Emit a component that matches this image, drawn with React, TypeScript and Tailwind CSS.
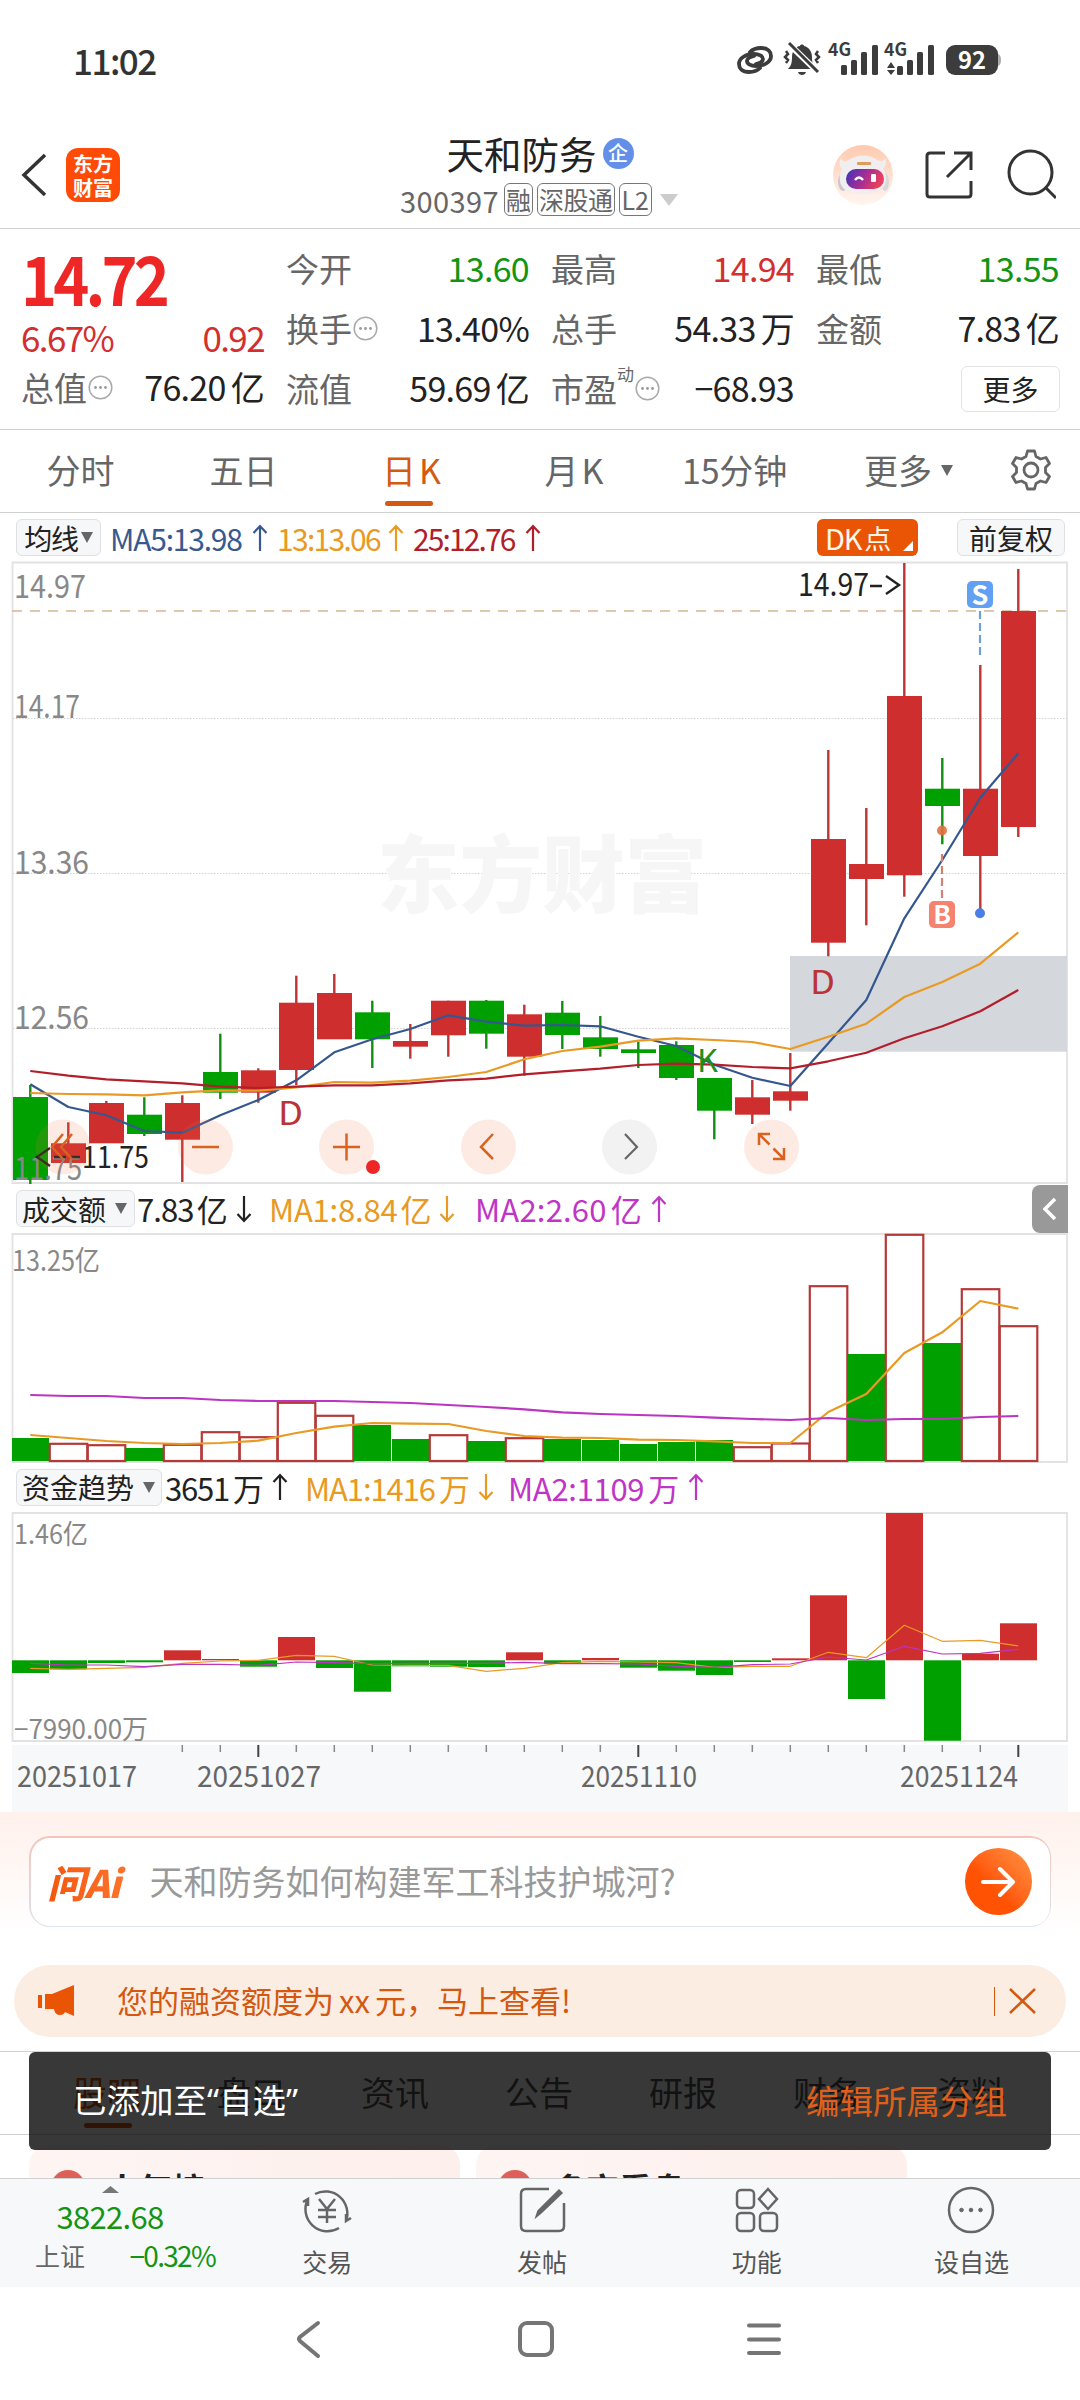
import React from 'react';

const RED = '#cf2e2e';
const GREEN = '#00a000';

const cx = (i: number) => 30.3 + 38 * i;

// [up, bodyTop, bodyBottom, wickTop, wickBottom]
const candles: [boolean, number, number, number, number][] = [
  [false, 1097, 1180, 1085, 1184],
  [true, 1143.3, 1163, 1122.3, 1163],
  [true, 1103, 1143.3, 1101, 1143],
  [false, 1114.7, 1134, 1097.3, 1136],
  [true, 1103, 1139.7, 1095.3, 1182],
  [false, 1072, 1092.7, 1033.7, 1099],
  [true, 1070.3, 1092.7, 1068.3, 1102.7],
  [true, 1002.7, 1070, 975.7, 1085],
  [true, 993, 1039.3, 974, 1039],
  [false, 1012.3, 1039.3, 1000.7, 1068],
  [true, 1041, 1046.7, 1024, 1058.7],
  [true, 1000.7, 1035.3, 1000.7, 1056.7],
  [false, 1000.7, 1033.7, 1000, 1048.7],
  [true, 1014.3, 1056.7, 1004.7, 1075.7],
  [false, 1012.7, 1035, 1001, 1049],
  [false, 1037.3, 1049, 1016, 1056.7],
  [false, 1049.3, 1053, 1041.7, 1068],
  [false, 1045, 1078, 1041.3, 1080],
  [false, 1078, 1110.7, 1078, 1139.3],
  [true, 1097.3, 1114.7, 1080, 1124],
  [true, 1091.3, 1100.7, 1053, 1110.7],
  [true, 839, 942.7, 750, 956.3],
  [true, 864, 879, 808, 925.3],
  [true, 696, 875.3, 563, 896.7],
  [false, 788.7, 806, 758, 844.3],
  [true, 788.7, 856, 665, 913],
  [true, 611, 827, 569, 837],
];

const ma5 = [1084.3, 1107, 1115.3, 1131, 1132.7, 1115.3, 1100, 1080.3, 1052.3, 1039.3, 1029, 1015.3, 1021.7, 1025.7, 1025, 1026.3, 1036.7, 1046, 1064.7, 1077.7, 1086, 1043.3, 1000, 918.3, 860, 797.7, 753.3];
const ma13 = [1093, 1094, 1094.3, 1095.3, 1092.3, 1090.3, 1090.7, 1087.3, 1082, 1082.7, 1080.7, 1077, 1072, 1059.3, 1051, 1046.7, 1040.7, 1038.3, 1040, 1042, 1049, 1036.7, 1023.7, 997, 982, 963.7, 932.3];
const ma25 = [1071, 1075.7, 1079.3, 1081.3, 1083.3, 1086.7, 1088, 1086.7, 1085.3, 1085.3, 1083.3, 1080.3, 1078.7, 1074.3, 1071.3, 1068.7, 1065, 1063.7, 1064.7, 1067, 1068.3, 1061.3, 1052.7, 1038.3, 1026.3, 1011.3, 990];

const volumes = [1438, 1443.3, 1444.7, 1448, 1444.3, 1431.7, 1436.7, 1402.3, 1415.3, 1425, 1439, 1434.7, 1441, 1437.7, 1439, 1440, 1444, 1442, 1440, 1446.7, 1443, 1285.7, 1354, 1234.3, 1343, 1288.7, 1325.7];
const outflowDays = [0, 3, 9, 10, 12, 14, 15, 16, 17, 18, 22, 24];
const volMa1 = [1435, 1438, 1441, 1443, 1444, 1443, 1440.7, 1433, 1426.7, 1423, 1423.7, 1424, 1431, 1436, 1437.7, 1438, 1439.7, 1440, 1441.3, 1443, 1443, 1412, 1394, 1353, 1332.3, 1301, 1308.7];
const volMa2 = [1395, 1396, 1396, 1398, 1398, 1400, 1401, 1401, 1401, 1402, 1403, 1405, 1407, 1409.3, 1412.3, 1414, 1415, 1416, 1417.7, 1419, 1420, 1418, 1420, 1419, 1419, 1417, 1416];

const funds = [1673, 1669.3, 1663, 1662.3, 1650.3, 1659, 1666.7, 1637, 1668, 1691.7, 1666.3, 1666.7, 1667, 1652.3, 1663.7, 1658, 1667.7, 1670.7, 1675, 1662, 1658.3, 1595.3, 1699, 1513, 1740.7, 1653.7, 1623.3];
const fundMa1 = [1668.3, 1669.3, 1668.3, 1667.3, 1663.3, 1661, 1660.3, 1655.3, 1656.3, 1665, 1665.3, 1665.3, 1671.3, 1668.3, 1662.7, 1661.3, 1662, 1662.7, 1667.3, 1666.3, 1666.3, 1652.3, 1657.7, 1625.3, 1641.3, 1640.3, 1646];
const fundMa2 = [1663.3, 1665, 1665, 1666.7, 1664.3, 1664.3, 1665.3, 1662, 1662.7, 1663.7, 1663.3, 1663.3, 1663.3, 1662.3, 1663.7, 1663.7, 1664, 1666.3, 1667.3, 1664.7, 1664, 1657, 1660, 1646.3, 1654, 1653.3, 1649.3];

const points = (ys: number[]) => ys.map((y, i) => `${cx(i)},${y}`).join(' ');

const Line = ({ ys, color, width = 2.2 }: { ys: number[]; color: string; width?: number }) => (
  <polyline points={points(ys)} fill="none" stroke={color} strokeWidth={width} strokeLinejoin="round" />
);

interface LabelProps {
  x: number;
  y: number;
  w: number;
  size: number;
  fill?: string;
  children: string;
}

const Label = ({ x, y, w, size, fill = '#888888', children }: LabelProps) => (
  <text x={x} y={y} fontSize={size} fill={fill} textLength={w} lengthAdjust="spacingAndGlyphs">
    {children}
  </text>
);

const More = () => (
  <svg className="h-[25px] w-[25px] shrink-0" viewBox="0 0 25 25">
    <circle cx="12.5" cy="12.5" r="11.3" fill="none" stroke="#aaaaaa" strokeWidth="1.5" />
    <circle cx="7.5" cy="12.5" r="1.4" fill="#999" />
    <circle cx="12.5" cy="12.5" r="1.4" fill="#999" />
    <circle cx="17.5" cy="12.5" r="1.4" fill="#999" />
  </svg>
);

const Caret = () => (
  <svg className="h-[11px] w-[12px] shrink-0" viewBox="0 0 12 11">
    <path d="M0 0h12L6 11z" fill="#666" />
  </svg>
);

const Arrow = ({ down = false }: { down?: boolean }) => (
  <svg className={down ? 'h-[28px] w-[16px] shrink-0 rotate-180' : 'h-[28px] w-[16px] shrink-0'} viewBox="0 0 16 28" fill="none" stroke="currentColor" strokeWidth="2.2">
    <path d="M8 27V2M1.5 9 8 2l6.500 7" />
  </svg>
);

const StatusBar = () => (
  <div className="flex h-[118px] items-center justify-between pl-[73px] pr-[79px]">
    <span className="text-[35px] leading-none font-medium tracking-[-1.5px] text-[#333]">11:02</span>
    <svg className="h-[52px] w-[266px]" viewBox="735 32 266 52" fill="none">
      <g stroke="#3c3c3c" strokeWidth="3.800" strokeLinecap="round">
        <path d="M750 51c3-3 7-4 11-4 7 0 10 4 10 8 0 6-7 10-15 10-5 0-9-2-9-5 0-2 3-4 7-5" />
        <path d="M760 67c-3 3-7 4-11 4-7 0-10-4-10-8 0-6 7-10 15-10 5 0 9 2 9 5 0 2-3 4-7 5" />
      </g>
      <path d="M788 68c3-3 4-6 4-12 0-6 4-11 8-11 0-2 4-2 4 0 5 1 8 6 8 11 0 6 1 9 4 12z" fill="#3c3c3c" />
      <path d="M798 71h8c-1 4-7 4-8 0z" fill="#3c3c3c" />
      <path d="M790 44 820 73" stroke="#fff" strokeWidth="6" />
      <path d="M789 42 818 71" stroke="#3c3c3c" strokeWidth="3" />
      <path d="m786 50 2 3-3 3 3 3-2 3M818 50l-2 3 3 3-3 3 2 3" stroke="#3c3c3c" strokeWidth="2.500" />
      <g fill="#3c3c3c">
        <text x="828" y="55" fontSize="18" fontWeight="700" textLength="23" lengthAdjust="spacingAndGlyphs">4G</text>
        <text x="884" y="55" fontSize="18" fontWeight="700" textLength="23" lengthAdjust="spacingAndGlyphs">4G</text>
        <rect x="841" y="64" width="6" height="10" rx="1.500" />
        <rect x="851" y="59" width="6" height="15" rx="1.500" />
        <rect x="861" y="51" width="6" height="23" rx="1.500" />
        <rect x="872" y="44" width="6" height="30" rx="1.500" />
        <path d="m887 67 4-6 4 6zM887 69h8l-4 5z" />
        <rect x="897" y="65" width="6" height="9" rx="1.500" />
        <rect x="907" y="59" width="6" height="15" rx="1.500" />
        <rect x="917" y="51" width="6" height="23" rx="1.500" />
        <rect x="928" y="44" width="6" height="30" rx="1.500" />
        <rect x="946" y="44" width="52" height="30" rx="9" />
      </g>
      <path d="M998 53q3 1 3 6t-3 6z" fill="#aaa" />
      <text x="958" y="68" fontSize="24" fontWeight="700" fill="#fff" textLength="28" lengthAdjust="spacingAndGlyphs">92</text>
    </svg>
  </div>
);

const Header = () => (
  <div className="relative flex h-[111px] justify-between border-b border-[#d0d0d0] pt-[24px] pl-[21px] pr-[24px]">
    <div className="flex h-[66px] items-center gap-[19px]">
      <svg className="h-[44px] w-[26px]" viewBox="0 0 26 44" fill="none" stroke="#333" strokeWidth="3.5">
        <path d="M24 2 3 22l21 20" />
      </svg>
      <div className="flex h-[54px] w-[54px] flex-col items-center justify-center gap-[3px] rounded-xl bg-[#ff4a08] text-[20px] leading-[21px] font-bold text-white">
        <span>东方</span>
        <span>财富</span>
      </div>
    </div>
    <div className="flex h-[66px] items-center">
      <svg className="h-[60px] w-[223px]" viewBox="833 145 223 60" fill="none">
        <defs>
          <linearGradient id="halo" x1="0" y1="0" x2="0" y2="1">
            <stop offset="0" stopColor="#ffc9ae" />
            <stop offset="1" stopColor="#fff6f1" />
          </linearGradient>
          <linearGradient id="visor" x1="0" y1="0" x2="1" y2="0.3">
            <stop offset="0" stopColor="#3b35b8" />
            <stop offset="0.5" stopColor="#9a2d9c" />
            <stop offset="1" stopColor="#ea3f5c" />
          </linearGradient>
        </defs>
        <circle cx="863" cy="175" r="30" fill="url(#halo)" />
        <ellipse cx="843" cy="182" rx="5" ry="9" fill="#c9c6cd" />
        <ellipse cx="885" cy="182" rx="4" ry="9" fill="#d9d6dc" />
        <path d="M842 169c-3-3-3-8-1-11 1 4 4 4 8 2 8-6 21-6 28 0 4 2 7 1 8-2 2 4 1 8-2 11 5 8 4 18-4 22-9 4-23 4-32 0-8-4-9-15-5-22z" fill="#f0eeee" />
        <rect x="857" y="162" width="14" height="3" rx="1" fill="#df9a60" />
        <rect x="846" y="169" width="38" height="20" rx="10" fill="url(#visor)" />
        <path d="M855 180q4-5 8 0" stroke="#fff" strokeWidth="2.500" />
        <rect x="871" y="174" width="5" height="8" rx="1" fill="#fff" />
        <g stroke="#333" strokeWidth="3">
          <path d="M945 153h-15q-3 0-3 3v38q0 3 3 3h38q3 0 3-3v-13M954 153h17v17M971 153l-24 24" />
          <circle cx="1030.500" cy="172.500" r="21.500" />
          <path d="m1045 187 11 11" />
        </g>
      </svg>
    </div>
    <div className="absolute inset-x-0 top-[16px] flex flex-col items-center gap-[11px]">
      <div className="flex items-center gap-[6px] text-[#222]">
        <span className="text-[37.500px] leading-[38px]">天和防务</span>
        <span className="flex h-[31px] w-[31px] items-center justify-center rounded-full bg-[#648fe8] text-[20px] leading-none font-medium text-white">企</span>
      </div>
      <div className="mr-[2px] flex items-center gap-[4px] text-[25px] leading-[30px] text-[#666]">
        <span className="mr-[1px] text-[29px] tracking-[0.4px]">300397</span>
        <span className="h-[33px] rounded-md border-[1.500px] border-[#777] px-[1px]">融</span>
        <span className="h-[33px] rounded-md border-[1.500px] border-[#777] px-[1px] tracking-[-0.5px]">深股通</span>
        <span className="h-[33px] rounded-md border-[1.500px] border-[#777] px-[2px]">L2</span>
        <svg className="ml-[4px] h-[12px] w-[18px]" viewBox="0 0 18 12">
          <path d="M0 0h18L9 12z" fill="#ccc" />
        </svg>
      </div>
    </div>
  </div>
);

interface StatProps {
  label: string;
  value: string;
  unit?: string;
  color?: string;
  more?: boolean;
  sup?: string;
}

const Stat = ({ label, value, unit, color = 'text-[#222]', more = false, sup }: StatProps) => (
  <div className="flex h-[36px] items-center">
    <span className="text-[33px] leading-none text-[#666]">{label}</span>
    {sup && <span className="-mt-[30px] text-[17px] leading-none text-[#666]">{sup}</span>}
    {more && <span className="ml-[1px]"><More /></span>}
    <span className={`ml-auto text-[34px] leading-none tracking-[-0.7px] ${color}`}>
      {value}
      {unit && <span className="ml-[5px]">{unit}</span>}
    </span>
  </div>
);

const Quote = () => (
  <div className="grid h-[201px] grid-cols-[243px_243px_243px_243px] gap-x-[22px] border-b border-[#d0d0d0] pt-[19px] pl-[21px]">
    <div className="flex flex-col">
      <span className="h-[62px] w-[170px] origin-left scale-x-90 text-[68px] leading-[58px] font-bold tracking-[-4.3px] text-[#ee2626]">14.72</span>
      <div className="mt-[8px] flex h-[36px] items-center justify-between text-[35px] leading-none tracking-[-1.6px] text-[#d42f2f]">
        <span>6.67%</span>
        <span>0.92</span>
      </div>
      <div className="mt-[15px]">
        <Stat label="总值" more value="76.20" unit="亿" />
      </div>
    </div>
    <div className="flex flex-col gap-[24px] pt-[2px]">
      <Stat label="今开" value="13.60" color="text-[#129512]" />
      <Stat label="换手" more value="13.40%" />
      <Stat label="流值" value="59.69" unit="亿" />
    </div>
    <div className="flex flex-col gap-[24px] pt-[2px]">
      <Stat label="最高" value="14.94" color="text-[#d42f2f]" />
      <Stat label="总手" value="54.33" unit="万" />
      <Stat label="市盈" sup="动" more value="−68.93" />
    </div>
    <div className="flex flex-col gap-[24px] pt-[2px]">
      <Stat label="最低" value="13.55" color="text-[#129512]" />
      <Stat label="金额" value="7.83" unit="亿" />
      <button className="-mt-[4px] -mr-[1px] ml-auto h-[46px] w-[99px] rounded-md border-[1.500px] border-[#e3e3e3] text-[28px] leading-none text-[#222]">更多</button>
    </div>
  </div>
);

const PeriodTabs = () => (
  <div className="flex h-[83px] items-center border-b border-[#d0d0d0] pb-[2px] text-[34px] leading-none text-[#666]">
    <span className="w-[161px] text-center">分时</span>
    <span className="w-[165px] text-center">五日</span>
    <span className="relative w-[171px] text-center text-[#d45a12]">
      日<span className="ml-[3px]">K</span>
      <i className="absolute top-[48px] left-[59px] h-[5px] w-[48px] rounded-sm bg-[#d45a12]" />
    </span>
    <span className="w-[154px] text-center">月<span className="ml-[3px]">K</span></span>
    <span className="w-[167px] text-center tracking-[-0.2px]">15分钟</span>
    <span className="ml-[46px] mr-[9px]">更多</span>
    <Caret />
    <svg className="ml-[57px] h-[42px] w-[42px]" viewBox="0 0 42 42" fill="none" stroke="#666" strokeWidth="2.800" strokeLinejoin="round">
      <path d="M17.500 2h7l1.500 5.500 4.500 2.500 5.500-1.500 3.500 6-4 4v5l4 4-3.500 6-5.500-1.500-4.500 2.500-1.500 5.500h-7L16 34.500 11.500 32 6 33.500l-3.500-6 4-4v-5l-4-4L6 8.500l5.500 1.500L16 7.500z" />
      <circle cx="21" cy="21" r="7" />
    </svg>
  </div>
);

const pill = 'flex h-[37px] items-center rounded-md border-[1.500px] border-[#dfe0e3] bg-[#f6f7f9] text-[28px] leading-none text-[#222]';

const AverageRow = () => (
  <div className="flex h-[47px] items-center pt-[2px] pl-[16px] text-[30px] leading-none tracking-[-1.2px]">
    <span className={`${pill} w-[85px] justify-center gap-[3px]`}>均线<Caret /></span>
    <span className="ml-[9px] flex w-[167px] items-center justify-between pr-[9px] text-[#38598f]"><span>MA5:13.98</span><Arrow /></span>
    <span className="flex w-[136px] items-center justify-between pr-[9px] tracking-[-1.7px] text-[#e89a22]"><span>13:13.06</span><Arrow /></span>
    <span className="flex w-[128px] items-center justify-between tracking-[-1.9px] text-[#b01e2a]"><span>25:12.76</span><Arrow /></span>
    <span className="relative ml-auto flex h-[37px] w-[101px] items-center rounded-md bg-[#e95505] pl-[8px] text-[29px] text-[#fff6ea]">
      DK<span className="ml-[3px] text-[27px]">点</span>
      <svg className="absolute right-[5px] bottom-[5px] h-[10px] w-[10px]" viewBox="0 0 10 10"><path d="M10 0v10H0z" fill="#fff" /></svg>
    </span>
    <span className={`${pill} mr-[15px] ml-[39px] w-[108px] justify-center tracking-normal`}>前复权</span>
  </div>
);

const round = [
  { x: 63, icon: 'm63 1134-11 13 11 12M72 1134l-11 13 11 12' },
  { x: 205.5, icon: 'M192 1147h27' },
  { x: 346.5, icon: 'M333 1147h27M346.5 1133.500v27' },
  { x: 488.5, icon: 'm493 1134-12 13 12 12' },
  { x: 771.5, icon: 'M759 1145v-11h11M759 1134l10.500 10.500M784 1148v11h-11M784 1159l-10.500-10.500' },
];

const KChart = () => (
  <svg className="block h-[625px] w-[1080px]" viewBox="0 560 1080 625">
    <path d="M12.500 562.500H1067V1183H12.500z" fill="none" stroke="#e2e2e2" strokeWidth="1.800" />
    <g stroke="#d3d3d3" strokeWidth="1" strokeDasharray="1.500 1.500">
      <path d="M13 718.500H1067M13 873.500H1067M13 1028.500H1067" />
    </g>
    <text x="377" y="906" fontSize="84" fontWeight="900" fill="#f6f6f6" textLength="330" lengthAdjust="spacingAndGlyphs">东方财富</text>
    <path d="M12 611H1067" stroke="#d9b690" strokeWidth="1.600" strokeDasharray="10 8" />
    <rect x="790" y="956" width="277" height="95.700" fill="#d4d7dc" />
    {candles.map(([up, top, bottom, high, low], i) => (
      <g key={i} fill={up ? RED : GREEN}>
        <rect x={cx(i) - 1.2} y={high} width="2.400" height={low - high} fill={up ? '#bb3535' : '#128f12'} />
        <rect x={cx(i) - 17.300} y={top} width="35" height={bottom - top} />
      </g>
    ))}
    <Line ys={ma5} color="#35578f" />
    <Line ys={ma13} color="#e99a24" />
    <Line ys={ma25} color="#b31e2b" />
    <Label x={14} y={598} w={72} size={32}>14.97</Label>
    <Label x={14} y={718} w={66} size={32}>14.17</Label>
    <Label x={14} y={874} w={75} size={32}>13.36</Label>
    <Label x={14} y={1029} w={75} size={32}>12.56</Label>
    <Label x={14} y={1180} w={68} size={32}>11.75</Label>
    <Label x={798} y={596} w={71} size={32} fill="#222">14.97</Label>
    <path d="M870 586h12M886 576l13 9-13 9" fill="none" stroke="#222" strokeWidth="2.400" />
    <path d="M50 1148l-13 9 13 9M54 1157h12M69 1157h11" fill="none" stroke="#222" strokeWidth="2.400" />
    <Label x={82} y={1168} w={67} size={31} fill="#222">11.75</Label>
    <Label x={278} y={1125} w={25} size={32} fill="#b93338">D</Label>
    <Label x={810} y={994} w={25} size={32} fill="#b93338">D</Label>
    <Label x={697} y={1072} w={21} size={31} fill="#1e8f1e">K</Label>
    <path d="M980 611v46" stroke="#6fa0d8" strokeWidth="2.200" strokeDasharray="8 4" />
    <path d="M942 854v44" stroke="#cf8177" strokeWidth="2.200" strokeDasharray="8 4" />
    <rect x="967" y="581" width="26" height="27" rx="5" fill="#62a0f3" />
    <text x="980" y="604.500" fontSize="27" fontWeight="700" fill="#fff" textAnchor="middle">S</text>
    <rect x="929" y="901" width="26" height="27" rx="5" fill="#f58370" />
    <text x="942" y="924" fontSize="26" fontWeight="700" fill="#fff" textAnchor="middle">B</text>
    <circle cx="942" cy="830.500" r="5" fill="#e2703f" opacity="0.9" />
    <circle cx="980" cy="913.300" r="5" fill="#4a80e6" />
    {round.map(({ x, icon }) => (
      <g key={x}>
        <circle cx={x} cy="1147" r="27.500" fill="#f4743b" fillOpacity="0.14" />
        <path d={icon} fill="none" stroke="#d8621f" strokeWidth="2.500" />
      </g>
    ))}
    <circle cx="629.500" cy="1147" r="27.500" fill="#f2f2f2" />
    <path d="m625 1134 12 13-12 12" fill="none" stroke="#666" strokeWidth="2.200" />
    <circle cx="373" cy="1167" r="7" fill="#ee2626" />
  </svg>
);

const VolumeRow = () => (
  <div className="flex h-[48px] items-center pb-[1px] pl-[16px] text-[31px] leading-none tracking-[-0.2px]">
    <span className={`${pill} w-[119px] gap-[9px] pl-[5px] tracking-normal`}>成交额<Caret /></span>
    <span className="ml-[2px] flex w-[132px] items-center gap-[9px] tracking-[-0.9px] text-[#222]"><span>7.83<span className="ml-[3px]">亿</span></span><Arrow down /></span>
    <span className="flex w-[206px] items-center gap-[8px] text-[#e89a22]"><span>MA1:8.84<span className="ml-[3px]">亿</span></span><Arrow down /></span>
    <span className="flex items-center gap-[9px] tracking-[0.2px] text-[#c035c6]"><span>MA2:2.60<span className="ml-[4px]">亿</span></span><Arrow /></span>
    <span className="mr-[12px] ml-auto flex h-[48px] w-[36px] items-center justify-center rounded-l-lg bg-[#999]">
      <svg className="h-[24px] w-[14px]" viewBox="0 0 14 24" fill="none" stroke="#fff" strokeWidth="3.500"><path d="M12 2 2 12l10 10" /></svg>
    </span>
  </div>
);

const VolumeChart = () => (
  <svg className="block h-[231px] w-[1080px]" viewBox="0 1233 1080 231">
    <path d="M12.500 1234H1067v228H12.500z" fill="none" stroke="#e2e2e2" strokeWidth="1.800" />
    {volumes.map((y, i) =>
      outflowDays.includes(i) ? (
        <rect key={i} x={cx(i) - 18.300} y={y} width="37" height={1461 - y} fill={GREEN} />
      ) : (
        <rect key={i} x={cx(i) - 18.500} y={y + 0.500} width="37.500" height={1460.500 - y} fill="#fff" stroke="#b43a3a" strokeWidth="2.200" />
      )
    )}
    <Line ys={volMa1} color="#e99a24" />
    <Line ys={volMa2} color="#bb35c0" />
    <Label x={12} y={1271} w={88} size={28}>13.25亿</Label>
  </svg>
);

const FundRow = () => (
  <div className="flex h-[47px] items-center pb-[1px] pl-[16px] text-[31px] leading-none tracking-[-0.7px]">
    <span className={`${pill} w-[146px] gap-[9px] pl-[5px] tracking-normal`}>资金趋势<Caret /></span>
    <span className="ml-[3px] flex w-[140px] items-center gap-[9px] tracking-[-1.2px] text-[#222]"><span>3651<span className="ml-[4px]">万</span></span><Arrow /></span>
    <span className="flex w-[203px] items-center gap-[9px] tracking-[-1.1px] text-[#e89a22]"><span>MA1:1416<span className="ml-[4px]">万</span></span><Arrow down /></span>
    <span className="flex items-center gap-[9px] tracking-[-0.3px] text-[#c035c6]"><span>MA2:1109<span className="ml-[4px]">万</span></span><Arrow /></span>
  </div>
);

const FundChart = () => (
  <svg className="block h-[234px] w-[1080px]" viewBox="0 1511 1080 234">
    <path d="M12.500 1513H1067v228H12.500z" fill="none" stroke="#e2e2e2" strokeWidth="1.800" />
    {funds.map((y, i) => (
      <rect key={i} x={cx(i) - 18.300} y={Math.min(y, 1660.300)} width="37" height={Math.abs(y - 1660.300)} fill={y < 1660.300 ? RED : GREEN} />
    ))}
    <Line ys={fundMa1} color="#e99a24" width={1.200} />
    <Line ys={fundMa2} color="#bb35c0" width={1.200} />
    <Label x={14} y={1544} w={74} size={27}>1.46亿</Label>
    <Label x={14} y={1739} w={134} size={27}>−7990.00万</Label>
  </svg>
);

const DateAxis = () => (
  <svg className="mx-[12px] block h-[67px] w-[1056px] bg-[#f7f8fa]" viewBox="12 1745 1056 67">
    {candles.map((_, i) =>
      i > 3 ? <path key={i} d={`M${cx(i)} 1745v${i % 10 === 6 ? 12 : 7}`} stroke={i % 10 === 6 ? '#444' : '#888'} strokeWidth={i % 10 === 6 ? 2 : 1.500} /> : null
    )}
    <Label x={17} y={1787} w={120} size={29} fill="#666">20251017</Label>
    <Label x={197} y={1787} w={124} size={29} fill="#666">20251027</Label>
    <Label x={581} y={1787} w={116} size={29} fill="#666">20251110</Label>
    <Label x={900} y={1787} w={118} size={29} fill="#666">20251124</Label>
  </svg>
);

const AskAi = () => (
  <div className="h-[153px] bg-gradient-to-b from-[#fff1ec] to-white to-80% px-[29px] pt-[24px]">
    <div className="rounded-[21px] bg-gradient-to-b from-[#f4c4bb] to-[#dde5ef] p-[1.500px]">
      <div className="flex h-[88px] items-center rounded-[19px] bg-white pr-[18px] pl-[17px]">
        <span className="w-[102px] bg-gradient-to-r from-[#f4570a] to-[#ff7a33] bg-clip-text text-[38px] leading-[44px] font-black tracking-[-1px] text-transparent italic">问Ai</span>
        <span className="-mt-[2px] text-[34px] leading-none text-[#999]">天和防务如何构建军工科技护城河?</span>
        <span className="ml-auto flex h-[67px] w-[67px] items-center justify-center rounded-full bg-gradient-to-tr from-[#ff5202] from-40% to-[#ff9440]">
          <svg className="h-[30px] w-[34px]" viewBox="0 0 34 30" fill="none" stroke="#fff" strokeWidth="4" strokeLinecap="round" strokeLinejoin="round">
            <path d="M2 15h30M19 2l13 13-13 13" />
          </svg>
        </span>
      </div>
    </div>
  </div>
);

const Notice = () => (
  <div className="mx-[14px] flex h-[72px] items-center rounded-full bg-[#fcede3] pl-[24px] pr-[30px] text-[#d4580f]">
    <svg className="h-[32px] w-[37px]" viewBox="0 0 37 32" fill="#e95505">
      <path d="M0 10h4v13H0zM7 9h7L36 0v31l-9-4q-1 3-5 3-5 0-6-6H7z" />
    </svg>
    <span className="-mt-[3px] ml-[42px] text-[31px] leading-none">您的融资额度为<span className="mx-[5px]">xx</span>元，马上查看!</span>
    <i className="ml-auto h-[29px] w-px bg-[#d4580f]" />
    <svg className="ml-[14px] h-[26px] w-[27px]" viewBox="0 0 27 26" fill="none" stroke="#d4580f" strokeWidth="2.500">
      <path d="m1 1 25 24M26 1 1 25" />
    </svg>
  </div>
);

const sections = ['股吧', '盘口', '资讯', '公告', '研报', '财务', '资料'];

const Sections = () => (
  <div className="relative mt-[14px] h-[127px] overflow-hidden border-t border-[#d0d0d0]">
    <div className="grid h-[83px] grid-cols-7 items-center border-b border-[#d0d0d0] pr-[37px] pb-[2px] pl-[35px] text-center text-[34px] leading-none text-[#555]">
      {sections.map((name, i) => (
        <span key={name} className={i === 0 ? 'relative text-[#d4580f]' : ''}>
          {name}
          {i === 0 && <i className="absolute top-[48px] left-[49px] h-[5px] w-[48px] rounded-sm bg-[#d4580f]" />}
        </span>
      ))}
    </div>
    <div className="mt-[10px] flex gap-[16px] px-[29px]">
      {['人气榜', '多空看盘'].map(name => (
        <div key={name} className="flex h-[90px] w-[431px] gap-[21px] rounded-[20px] bg-gradient-to-r from-[#fef5f2] to-[#fdefec] pt-[23px] pl-[22px] text-[33px] leading-[40px] font-bold text-[#222]">
          <i className="mt-[2px] h-[34px] w-[34px] rounded-full bg-[#dd6159]" />
          {name}
        </div>
      ))}
    </div>
    <div className="absolute top-0 left-[29px] flex h-[98px] w-[1022px] items-center justify-between rounded-md bg-black/78 pr-[44px] pb-[2px] pl-[44px] text-[33.500px] leading-none">
      <span className="text-white">已添加至<span className="font-['Noto_Sans']">“</span>自选<span className="font-['Noto_Sans']">”</span></span>
      <span className="text-[#e0601a]">编辑所属分组</span>
    </div>
  </div>
);

const actions = [
  {
    label: '交易',
    icon: (
      <>
        <path d="M13 9A22 22 0 0 1 44 36M37 43A22 22 0 0 1 6 14M1 17l5-3v7M49 33l-5 3v-7" />
        <path d="m17 14 8 10 8-10M25 24v14M16 25h18M16 32h18" />
      </>
    ),
  },
  {
    label: '发帖',
    icon: (
      <>
        <path d="M32 4H9q-5 0-5 5v32q0 5 5 5h33q5 0 5-5V18" />
        <path d="m19 32 2-6L42 5l3 3-21 20z" fill="#666" strokeWidth="1.500" />
      </>
    ),
  },
  {
    label: '功能',
    icon: (
      <>
        <rect x="5" y="5" width="17" height="18" rx="4" />
        <rect x="5" y="28" width="17" height="18" rx="4" />
        <rect x="28" y="28" width="17" height="18" rx="4" />
        <path d="m36 4 9 10-9 10-9-10z" />
      </>
    ),
  },
  {
    label: '设自选',
    icon: (
      <>
        <circle cx="25" cy="25" r="22" />
        <g fill="#666" strokeWidth="1">
          <circle cx="15.500" cy="25" r="1.800" />
          <circle cx="25" cy="25" r="1.800" />
          <circle cx="34.500" cy="25" r="1.800" />
        </g>
      </>
    ),
  },
];

const BottomBar = () => (
  <div className="flex h-[109px] border-t border-[#d0d0d0] bg-[#f7f8fa]">
    <div className="flex w-[220px] flex-col items-center">
      <svg className="mt-[7px] h-[7px] w-[17px]" viewBox="0 0 17 7"><path d="M0 7 8.500 0 17 7z" fill="#777" /></svg>
      <span className="mt-[7px] text-[31px] leading-[32px] tracking-[-0.7px] text-[#129512]">3822.68</span>
      <div className="mt-[9px] ml-[30px] flex w-[180px] items-center justify-between text-[25px] leading-[28px]">
        <span className="text-[#666]">上证</span>
        <span className="text-[28px] tracking-[-1.7px] text-[#129512]">−0.32%</span>
      </div>
    </div>
    {actions.map(({ label, icon }) => (
      <div key={label} className="flex w-[214.700px] flex-col items-center">
        <svg className="mt-[6px] h-[50px] w-[50px]" viewBox="0 0 50 50" fill="none" stroke="#666" strokeWidth="2.500">{icon}</svg>
        <span className="mt-[12px] text-[25px] leading-[28px] text-[#555]">{label}</span>
      </div>
    ))}
  </div>
);

const SystemNav = () => (
  <svg className="block h-[113px] w-[1080px]" viewBox="0 2287 1080 113" fill="none" stroke="#757575" strokeWidth="4" strokeLinecap="round">
    <path d="m318 2323-18 14q-2 2 0 4l18 15" />
    <rect x="520" y="2323" width="32" height="32" rx="7" />
    <path d="M749 2325.500h30M749 2339.500h30M749 2353h30" />
  </svg>
);

export default function App() {
  return (
    <div className="h-[2400px] w-[1080px] overflow-hidden bg-white font-['Noto_Sans_CJK_SC',sans-serif]">
      <StatusBar />
      <Header />
      <Quote />
      <PeriodTabs />
      <AverageRow />
      <KChart />
      <VolumeRow />
      <VolumeChart />
      <FundRow />
      <FundChart />
      <DateAxis />
      <AskAi />
      <Notice />
      <Sections />
      <BottomBar />
      <SystemNav />
    </div>
  );
}
